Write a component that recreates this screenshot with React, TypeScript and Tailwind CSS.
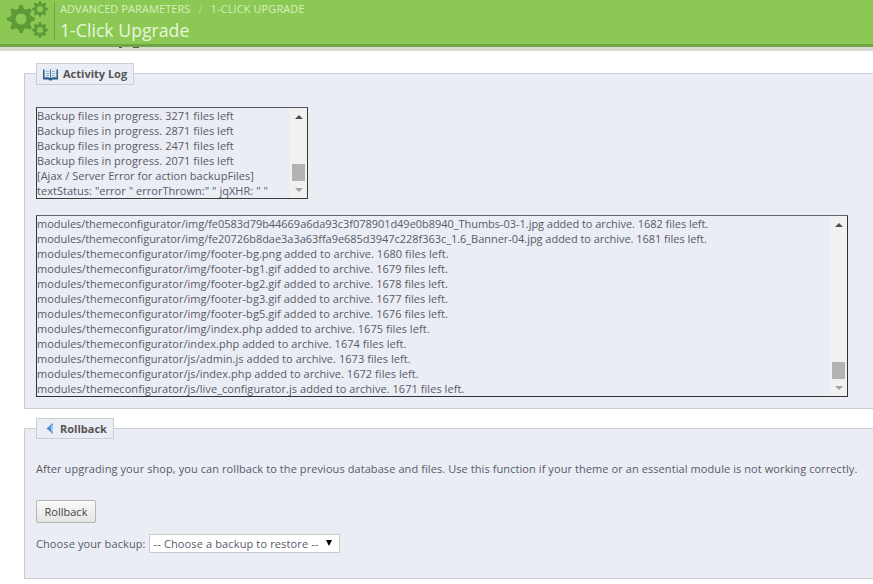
const font = { fontFamily: '"Open Sans", sans-serif' };

const shortLog = [
  'Backup files in progress. 3271 files left',
  'Backup files in progress. 2871 files left',
  'Backup files in progress. 2471 files left',
  'Backup files in progress. 2071 files left',
  '[Ajax / Server Error for action backupFiles]',
  'textStatus: "error " errorThrown:" " jqXHR: " "',
];

const longLog = [
  { text: 'modules/themeconfigurator/img/fe0583d79b44669a6da93c3f078901d49e0b8940_Thumbs-03-1.jpg added to archive. 1682 files left.', cls: 'tracking-[-0.035px]' },
  { text: 'modules/themeconfigurator/img/fe20726b8dae3a3a63ffa9e685d3947c228f363c_1.6_Banner-04.jpg added to archive. 1681 files left.', cls: 'tracking-[-0.035px]' },
  { text: 'modules/themeconfigurator/img/footer-bg.png added to archive. 1680 files left.', cls: 'tracking-[0.05px]' },
  { text: 'modules/themeconfigurator/img/footer-bg1.gif added to archive. 1679 files left.', cls: 'tracking-[0.05px]' },
  { text: 'modules/themeconfigurator/img/footer-bg2.gif added to archive. 1678 files left.', cls: 'tracking-[0.05px]' },
  { text: 'modules/themeconfigurator/img/footer-bg3.gif added to archive. 1677 files left.', cls: 'tracking-[0.05px]' },
  { text: 'modules/themeconfigurator/img/footer-bg5.gif added to archive. 1676 files left.', cls: 'tracking-[0.05px]' },
  { text: 'modules/themeconfigurator/img/index.php added to archive. 1675 files left.', cls: 'tracking-[0.05px]' },
  { text: 'modules/themeconfigurator/index.php added to archive. 1674 files left.', cls: 'tracking-[0.05px]' },
  { text: 'modules/themeconfigurator/js/admin.js added to archive. 1673 files left.', cls: 'tracking-[0.05px]' },
  { text: 'modules/themeconfigurator/js/index.php added to archive. 1672 files left.', cls: 'tracking-[0.05px]' },
  { text: 'modules/themeconfigurator/js/live_configurator.js added to archive. 1671 files left.', cls: 'tracking-[0.05px]' },
];

function Gears() {
  const gear = (cx: number, cy: number, r: number, teeth: number, hole: number) => {
    const pts: string[] = [];
    const n = teeth * 4;
    for (let i = 0; i < n; i++) {
      const a = ((i - 0.5) / n) * Math.PI * 2;
      const rr = i % 4 < 2 ? r : r * 0.74;
      pts.push(`${(cx + Math.cos(a) * rr).toFixed(2)},${(cy + Math.sin(a) * rr).toFixed(2)}`);
    }
    return (
      <g key={`${cx}-${cy}`}>
        <polygon points={pts.join(' ')} fill="#5f9a38" />
        <circle cx={cx} cy={cy} r={hole} fill="#8bc954" />
      </g>
    );
  };
  return (
    <svg width="44" height="38" viewBox="0 0 44 38">
      {gear(14, 19, 14, 8, 5.5)}
      {gear(33, 9, 8, 8, 3)}
      {gear(33, 30, 8, 8, 3)}
    </svg>
  );
}

function Scrollbar({ thumbClass }: { thumbClass: string }) {
  return (
    <div className="flex w-[17px] shrink-0 flex-col items-center bg-[#f1f1f1]">
      <div className="mt-[7px] h-0 w-0 border-x-[4px] border-b-[4px] border-x-transparent border-b-[#505050]" />
      <div className="flex-1" />
      <div className={`w-[13px] bg-[#b3b3b3] ${thumbClass}`} />
      <div className="mb-[6px] mt-[7px] h-0 w-0 border-x-[4px] border-t-[4px] border-x-transparent border-t-[#a3a3a3]" />
    </div>
  );
}

function Legend({ icon, label, className }: { icon: React.ReactNode; label: string; className: string }) {
  return (
    <div className={`-mt-[11px] ml-[11px] flex items-center border border-[#ccced7] bg-[#ebedf4] text-[11px] font-bold text-[#555] ${className}`}>
      {icon}
      <span>{label}</span>
    </div>
  );
}

export default function App() {
  return (
    <div className="h-[584px] w-[873px] overflow-hidden bg-white text-[11px] leading-[15px] text-[#585a69]" style={font}>
      <header className="box-content flex h-[44px] items-start border-b-[3px] border-[#6fa544] bg-[#8bc954] pl-[7px]">
        <div className="w-[47px] shrink-0"><Gears /></div>
        <div className="mt-[2px] h-[38px] border-l border-[#6fa544] pl-[5px] text-[#d5efbf]">
          <div className="-mt-[1px] flex h-[15px] items-center text-[11px] tracking-[0.08px]">
            <span>ADVANCED PARAMETERS</span>
            <span className="mx-[8px] text-[#b5e08e]">/</span>
            <span className="tracking-[0.1px]">1-CLICK UPGRADE</span>
          </div>
          <div className="mt-[3px] text-[17.7px] leading-[22px] text-[#e8f7dc]">1-Click Upgrade</div>
        </div>
      </header>
      <div className="flex h-[4px] items-start bg-[#d7d9d3]">
        <span className="ml-[119px] h-[1px] w-[3px] bg-[#55584f]" />
        <span className="ml-[11px] h-[1px] w-[6px] bg-[#55584f]" />
      </div>

      <section className="ml-[24px] mt-[22px] h-[336px] border border-r-0 border-[#ccced7] bg-[#ebedf4]">
        <Legend
          className="h-[22px] w-[98px] pb-[2px] pl-[6px]"
          label="Activity Log"
          icon={
            <svg width="15" height="13" viewBox="0 0 15 13" className="mr-[5px] mt-[2px]">
              <path d="M0 1.5h15v10h-5.5l-1 1h-2l-1-1H0z" fill="#2a5d8c" />
              <path d="M1.5 1c2-.6 4.6-.6 5.6.6v8.4c-1.1-1-3.6-1-5.6-.5zM13.5 1c-2-.6-4.6-.6-5.6.6v8.4c1.1-1 3.6-1 5.6-.5z" fill="#dde7f1" />
              <path d="M3 3.5h3M3 5.5h3M3 7.5h3M9 3.5h3M9 5.5h3M9 7.5h3" stroke="#8aa6c2" strokeWidth="0.8" />
            </svg>
          }
        />
        <div className="ml-[11px] mt-[22px] flex h-[92px] w-[272px] overflow-hidden border border-[#3a3a3a] border-t-[#555]">
          <div className="flex-1 overflow-hidden whitespace-nowrap tracking-[0.035px]">
            {shortLog.map((l) => <div key={l}>{l}</div>)}
          </div>
          <Scrollbar thumbClass="h-[17px]" />
        </div>
        <div className="ml-[11px] mt-[16px] flex h-[182px] w-[812px] overflow-hidden border border-[#333] border-t-[#666]">
          <div className="flex-1 overflow-hidden whitespace-nowrap">
            {longLog.map((l) => <div key={l.text} className={l.cls}>{l.text}</div>)}
          </div>
          <Scrollbar thumbClass="h-[17px]" />
        </div>
      </section>

      <section className="ml-[24px] mt-[19px] h-[151px] border border-r-0 border-[#ccced7] bg-[#ebedf4]">
        <Legend
          className="h-[21px] w-[78px] pl-[9px]"
          label="Rollback"
          icon={
            <svg width="7" height="11" viewBox="0 0 7 11" className="mr-[7px]">
              <path d="M7 0v11L0.5 5.5z" fill="#4f8fd4" />
              <path d="M7 1.5v8L5 7.8V3.2z" fill="#a4c8ec" />
            </svg>
          }
        />
        <p className="ml-[11px] mt-[22px] whitespace-nowrap tracking-[0.08px]">
          After upgrading your shop, you can rollback to the previous database and files. Use this function if your theme or an essential module is not working correctly.
        </p>
        <button className="ml-[11px] mt-[24px] block h-[23px] w-[60px] rounded-[2px] border border-[#b4b4b4] bg-gradient-to-b from-[#fafafa] to-[#e4e4e4] text-[11px] text-[#444]">
          Rollback
        </button>
        <div className="ml-[11px] mt-[11px] flex items-center">
          <span className="tracking-[0.1px]">Choose your backup:</span>
          <div className="ml-[3px] flex h-[19px] w-[191px] items-center border border-[#ccc] bg-white pl-[4px]">
            <span className="flex-1 tracking-[0.13px]">-- Choose a backup to restore --</span>
            <span className="mb-[2px] mr-[7px] h-0 w-0 border-x-[3.5px] border-t-[6px] border-x-transparent border-t-black" />
          </div>
        </div>
      </section>
    </div>
  );
}
